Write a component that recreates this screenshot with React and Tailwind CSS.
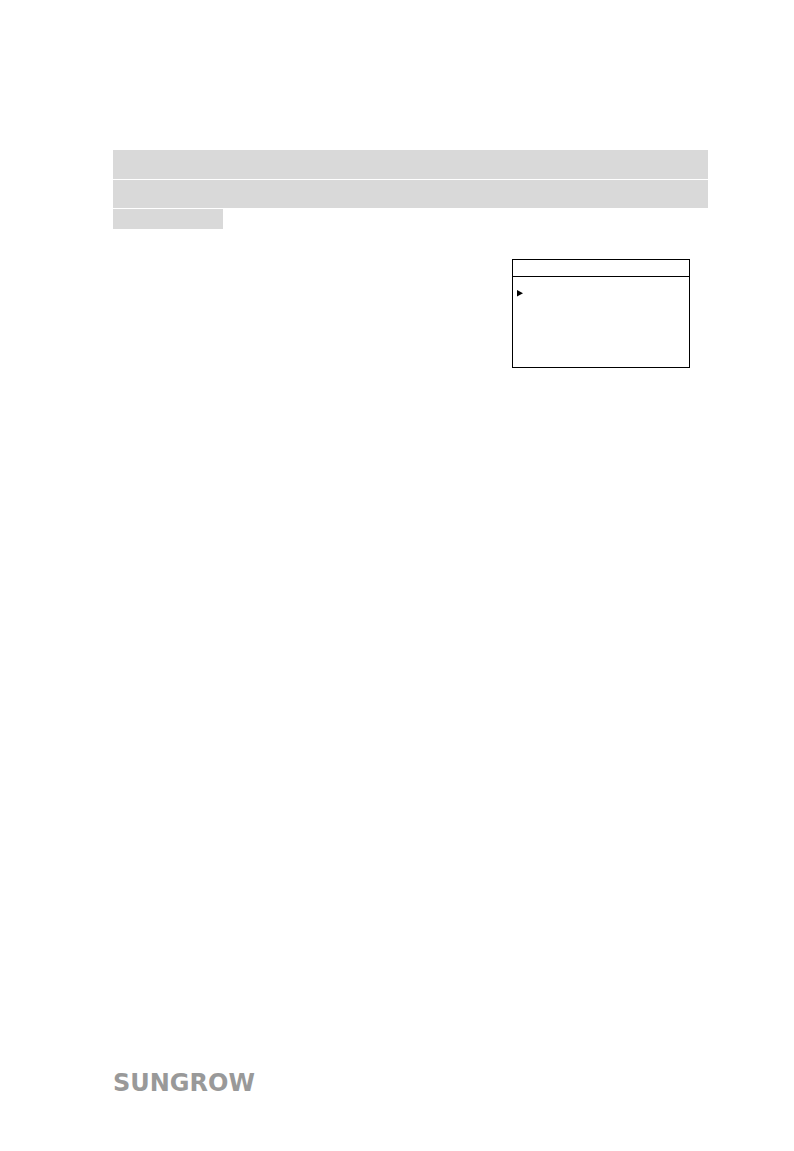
function NoticeBars() {
  return (
    <div className="flex flex-col gap-px">
      <div className="h-[29px] bg-[#d9d9d9]" />
      <div className="h-7 bg-[#d9d9d9]" />
      <div className="h-5 w-[110px] bg-[#d9d9d9]" />
    </div>
  )
}

function LcdScreen() {
  return (
    <section className="mt-[30px] mr-[18px] w-[178px] self-end border border-black">
      <header className="h-[17px] border-b border-black" />
      <div className="h-[90px] px-1 pt-[13px]">
        <svg width="6" height="7" viewBox="0 0 6 7" aria-hidden="true">
          <path d="M0 0 L6 3.3 L0 6.6 Z" fill="#000" />
        </svg>
      </div>
    </section>
  )
}

function Logo() {
  return (
    <span className="text-2xl leading-8 font-bold text-[#999999] font-['DejaVu_Sans',sans-serif]">
      SUNGROW
    </span>
  )
}

export default function App() {
  return (
    <div className="flex min-h-screen flex-col bg-white pt-[150px] pr-[86px] pb-[52px] pl-[113px]">
      <main className="flex flex-col">
        <NoticeBars />
        <LcdScreen />
      </main>
      <footer className="mt-auto flex">
        <Logo />
      </footer>
    </div>
  )
}
